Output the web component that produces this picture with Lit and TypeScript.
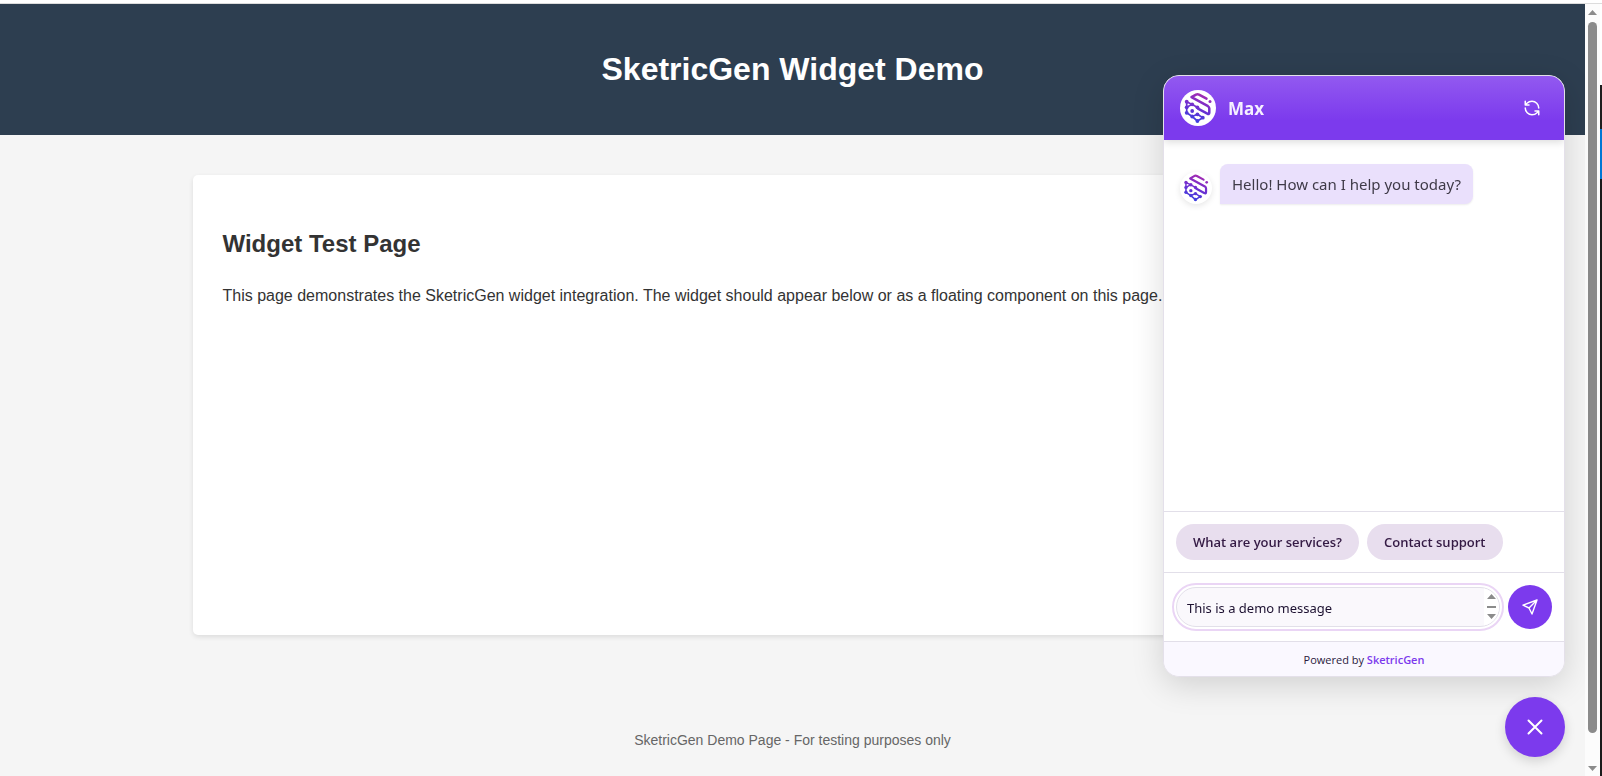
import { LitElement, html, css, svg } from "lit";
import { customElement, property } from "lit/decorators.js";

@customElement("brand-mark")
class BrandMark extends LitElement {
  static styles = css`
    :host { display: block; background: #fff; border-radius: 50%; overflow: hidden; }
    svg { display: block; width: 100%; height: 100%; }
  `;
  private nodes = [
    [6.7, 11.7], [6.7, 17.3], [6.7, 22.8], [12.2, 14.3], [17.4, 17.3], [12.2, 21],
    [17.4, 24.3], [12.2, 26.5], [17.4, 31], [22.8, 27.7],
  ];
  render() {
    return html`<svg viewBox="0 0 36 36" aria-hidden="true">
      <defs>
        <linearGradient id="g" gradientUnits="userSpaceOnUse" x1="24" y1="4" x2="14" y2="32">
          <stop offset="0" stop-color="#a62bb0" />
          <stop offset="0.5" stop-color="#6f2fd0" />
          <stop offset="1" stop-color="#3a3fe0" />
        </linearGradient>
      </defs>
      <g fill="none" stroke="url(#g)" stroke-linejoin="round" stroke-linecap="round">
        <path stroke-width="2.500" d="M26.500 8.600 L19 4.600 Q17.500 3.800 16 4.600 L11.500 7.200 L28 16.200 Q29.300 17 29.300 18.500 V22.500 Q29.300 24.800 27.300 23.700 L18 18.600" />
        <path stroke-width="1.700" d="M6.700 11.700 V22.800 L12.200 26.500 L17.400 31 L22.800 27.700 L17.400 24.300 L12.200 26.500 M6.700 11.700 L17.400 17.300 M6.700 17.300 L12.200 14.300" />
      </g>
      <g fill="url(#g)">
        ${this.nodes.map(([x, y]) => svg`<circle cx=${x} cy=${y} r="1.900" />`)}
        <circle cx="30" cy="11.600" r="1.500" />
      </g>
    </svg>`;
  }
}

@customElement("chat-widget")
class ChatWidget extends LitElement {
  @property() name = "Max";
  @property({ attribute: false }) suggestions = ["What are your services?", "Contact support"];

  static styles = css`
    :host {
      display: flex; flex-direction: column; box-sizing: border-box;
      width: 402px; height: 602px; border: 1px solid #e4e0ea; border-radius: 16px;
      overflow: hidden; background: #fff; color: #2b1a3d;
      font-family: "Open Sans", "Noto Sans", sans-serif;
      box-shadow: 0 8px 32px rgba(0, 0, 0, 0.15);
    }
    button { font: inherit; border: 0; padding: 0; cursor: pointer; }
    .head {
      display: flex; align-items: center; gap: 12px; height: 64px; box-sizing: border-box;
      padding: 0 16px; color: #fff; background: linear-gradient(#9259f0, #7c3aed 70%);
      box-shadow: 0 2px 8px rgba(0, 0, 0, 0.15); flex: none; z-index: 1;
    }
    .head brand-mark { width: 36px; height: 36px; }
    .name { flex: 1; margin: 0; padding-top: 2px; font-size: 17px; line-height: 24px; font-weight: 700; color: #f6f0ff; }
    .refresh { width: 32px; height: 32px; display: grid; place-items: center; background: none; color: #fff; }
    .messages { flex: 1; padding: 24px 16px; }
    .message { display: flex; align-items: flex-end; gap: 8px; }
    .message brand-mark { width: 32px; height: 32px; box-shadow: 0 2px 6px rgba(0, 0, 0, 0.1); }
    .bubble {
      margin: 0; padding: 8px 12px; font-family: "Noto Sans", sans-serif; font-size: 15px; line-height: 24px; color: #3f3a48;
      background: #eae0fc; border-radius: 8px 8px 8px 0; box-shadow: 0 1px 2px rgba(0, 0, 0, 0.08);
    }
    .chips { display: flex; gap: 8px; padding: 12px; border-top: 1px solid #e2dfe9; }
    .chip {
      height: 36px; padding: 0 17px; border-radius: 18px; background: #e8deee;
      color: #341a44; font-size: 13px; line-height: 20px; font-weight: 600;
    }
    .composer { display: flex; align-items: center; gap: 8px; padding: 12px; border-top: 1px solid #e2dfe9; }
    .field {
      flex: 1; display: flex; height: 40px; box-sizing: border-box; overflow: hidden;
      border: 1px solid #e2dfe9; border-radius: 20px; background: #faf8fc;
      outline: 2px solid #ead5f5; outline-offset: 2px;
    }
    textarea {
      flex: 1; min-width: 0; border: 0; padding: 10px 0 8px 10px; resize: none; outline: 0;
      background: none; overflow: hidden; color: #1c1030;
      font: 13px/20px "Noto Sans", sans-serif;
    }
    .stepper { width: 15px; height: 38px; background: #fff; }
    .send { width: 44px; height: 44px; border-radius: 50%; background: #7c3aed; color: #fff; display: grid; place-items: center; }
    .foot {
      margin: 0; padding: 9px 0 8px; border-top: 1px solid #e2dfe9; background: #faf8ff;
      text-align: center; font-size: 11px; line-height: 17px;
    }
    .foot a { color: #7c3aed; font-weight: 600; text-decoration: none; }
  `;

  render() {
    return html`
      <header class="head">
        <brand-mark></brand-mark>
        <h2 class="name">${this.name}</h2>
        <button class="refresh" aria-label="Restart conversation">
          <svg width="18" height="18" viewBox="0 0 24 24" fill="none" stroke="currentColor" stroke-width="2" stroke-linecap="round" stroke-linejoin="round">
            <path d="M21 12a9 9 0 0 0-9-9 9.750 9.750 0 0 0-6.740 2.740L3 8 M3 3v5h5 M3 12a9 9 0 0 0 9 9 9.750 9.750 0 0 0 6.740-2.740L21 16 M16 16h5v5" />
          </svg>
        </button>
      </header>
      <div class="messages">
        <div class="message"><brand-mark></brand-mark><p class="bubble">Hello! How can I help you today?</p></div>
      </div>
      <div class="chips">${this.suggestions.map((s) => html`<button class="chip">${s}</button>`)}</div>
      <form class="composer">
        <div class="field">
          <textarea rows="1" aria-label="Message" spellcheck="false" .value=${"This is a demo message"}></textarea>
          <svg class="stepper" viewBox="0 0 15 38" fill="#8b8b8b" aria-hidden="true">
            <path d="M3 11 L7.500 6 L12 11 Z M3 18 H12 V20 H3 Z M3 26 L7.500 31 L12 26 Z" />
          </svg>
        </div>
        <button class="send" type="button" aria-label="Send">
          <svg width="16" height="16" viewBox="0 0 16 16" fill="none" stroke="currentColor" stroke-width="1.400" stroke-linejoin="round" stroke-linecap="round">
            <path d="M15 1 L1 6.200 L7 9 L10 15 Z M15 1 L7 9" />
          </svg>
        </button>
      </form>
      <p class="foot">Powered by <a href="#">SketricGen</a></p>
    `;
  }
}

@customElement("app-root")
class AppRoot extends LitElement {
  static styles = css`
    :host {
      display: flex; flex-direction: column; min-height: 100vh; background: #fff;
      font-family: "Liberation Sans", Arial, sans-serif; color: #333;
    }
    .strip { height: 3px; border-bottom: 1px solid #dcdcdc; }
    .window { flex: 1; display: flex; }
    .page { flex: 1; min-width: 0; background: #f5f5f5; }
    .banner { padding: 41px 20px 42px; background: #2d3e50; color: #fff; text-align: center; }
    h1 { margin: 0; font-size: 32px; line-height: 48px; }
    .card {
      box-sizing: border-box; max-width: 1200px; min-height: 460px; margin: 40px auto; padding: 50px 30px 30px;
      background: #fff; border-radius: 5px; box-shadow: 0 2px 5px rgba(0, 0, 0, 0.1);
    }
    h2 { margin: 0 0 21px; font-size: 24px; line-height: 38px; }
    .card p { margin: 0; font-size: 16px; line-height: 24px; }
    .foot { padding: 54px 20px 20px; text-align: center; font-size: 14px; line-height: 22px; color: #666; }
    .scroll { width: 15px; display: flex; flex-direction: column; align-items: center; background: #fcfcfc; padding: 6px 0 5px; box-sizing: border-box; }
    .scroll svg { display: block; flex: none; }
    .thumb { width: 9px; flex: 1; margin: 7px 0 33px; border-radius: 5px; background: #8b8b8b; }
    .edge { width: 2px; display: flex; flex-direction: column; padding-top: 81px; box-sizing: border-box; }
    .dark { height: 44px; background: #1e1e1e; }
    .blue { height: 50px; background: #0078d4; }
    .rest { flex: 1; background: #1a1a1a; }
    .dock { position: fixed; right: 37px; bottom: 19px; display: flex; flex-direction: column; align-items: flex-end; gap: 20px; }
    .toggle {
      width: 60px; height: 60px; padding: 0; border: 0; border-radius: 50%; background: #7c3aed; color: #fff;
      display: grid; place-items: center; box-shadow: 0 4px 12px rgba(0, 0, 0, 0.15);
    }
  `;

  render() {
    return html`
      <div class="strip"></div>
      <div class="window">
        <div class="page">
          <header class="banner"><h1>SketricGen Widget Demo</h1></header>
          <main class="card">
            <h2>Widget Test Page</h2>
            <p>This page demonstrates the SketricGen widget integration. The widget should appear below or as a floating component on this page.</p>
          </main>
          <footer class="foot">SketricGen Demo Page - For testing purposes only</footer>
        </div>
        <div class="scroll" aria-hidden="true">
          <svg width="9" height="5" viewBox="0 0 9 5" fill="#8b8b8b"><path d="M0 5 L4.500 0 L9 5 Z" /></svg>
          <div class="thumb"></div>
          <svg width="9" height="5" viewBox="0 0 9 5" fill="#8b8b8b"><path d="M0 0 L4.500 5 L9 0 Z" /></svg>
        </div>
        <div class="edge"><div class="dark"></div><div class="blue"></div><div class="rest"></div></div>
      </div>
      <div class="dock">
        <chat-widget></chat-widget>
        <button class="toggle" aria-label="Close chat">
          <svg width="16" height="16" viewBox="0 0 16 16" fill="none" stroke="currentColor" stroke-width="2" stroke-linecap="round">
            <path d="M1.500 1.500 L14.500 14.500 M14.500 1.500 L1.500 14.500" />
          </svg>
        </button>
      </div>
    `;
  }
}
